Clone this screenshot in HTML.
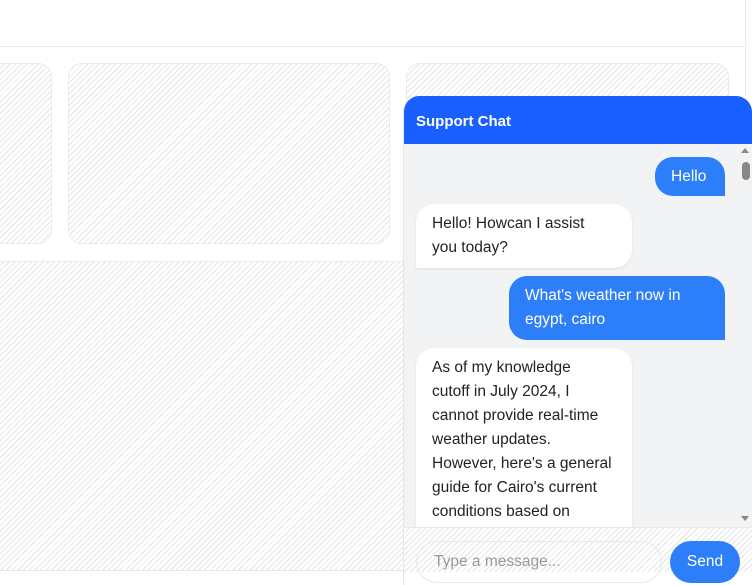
<!DOCTYPE html>
<html><head><style>
*{box-sizing:border-box;margin:0;padding:0}
body{width:752px;height:585px;overflow:hidden;background:#fff;font-family:"Liberation Sans",sans-serif;position:relative}
.hatch{background:repeating-linear-gradient(-45deg,#fff 0px,#fff 3px,#e4e4e4 3px,#e4e4e4 4px)}
.line{position:absolute;background:#ececec}
.card{position:absolute;border:1px solid #ebebeb;border-radius:14px}
#chat{position:absolute;left:403px;top:96px;width:349px;height:489px;border-radius:16px 16px 0 0;overflow:hidden;border-left:1px solid #e5e5e5}
#hd{height:48px;background:#1a5fff;color:#fff;font-weight:bold;font-size:15px;padding:17px 0 0 12px}
#bd{position:absolute;top:48px;left:0;width:349px;height:383px;background:#f2f3f5;overflow:hidden}
.b{position:absolute;font-size:15.5px;line-height:24px;padding:8px 16px;border-radius:18px;white-space:nowrap}
.u{background:#2d7ff9;color:#fff;border-bottom-right-radius:0}
.a{background:#fff;color:#222;border-bottom-left-radius:0;box-shadow:0 1px 2px rgba(0,0,0,.08)}
#sb{position:absolute;right:0;top:0;width:15px;height:383px;background:#f2f3f5}
#ft{position:absolute;top:431px;left:0;width:349px;height:58px;border-top:1px solid #e8e8e8}
</style></head><body>
<div class="line" style="left:0;top:46px;width:745px;height:1px"></div>
<div class="line" style="left:745px;top:0;width:1px;height:96px"></div>
<div class="card hatch" style="left:-20px;top:63px;width:72px;height:181px"></div>
<div class="card hatch" style="left:68px;top:63px;width:322px;height:181px"></div>
<div class="card hatch" style="left:406px;top:63px;width:323px;height:60px"></div>
<div class="hatch" style="position:absolute;left:0;top:261px;width:730px;height:310px;border-top:1px solid #ececec;border-bottom:1px solid #e6e6e6"></div>
<div id="chat">
<div id="hd">Support Chat</div>
<div id="bd">
<div class="b u" style="left:251px;top:13px;width:70px;height:39px;padding-left:16px">Hello</div>
<div class="b a" style="left:12px;top:60px;width:216px;height:64px">Hello! Howcan I assist<br>you today?</div>
<div class="b u" style="left:105px;top:132px;width:216px;height:64px">What's weather now in<br>egypt, cairo</div>
<div class="b a" style="left:12px;top:204px;width:216px;height:240px">As of my knowledge<br>cutoff in July 2024, I<br>cannot provide real-time<br>weather updates.<br>However, here's a general<br>guide for Cairo's current<br>conditions based on</div>
<div id="sb"><div style="position:absolute;left:3px;top:4px;border:4px solid transparent;border-bottom:5px solid #888;border-top:0"></div><div style="position:absolute;left:4px;top:18px;width:8px;height:18px;border-radius:4px;background:#888"></div><div style="position:absolute;left:3px;bottom:6px;border:4px solid transparent;border-top:5px solid #888;border-bottom:0"></div></div>
</div>
<div id="ft" class="hatch">
<div style="position:absolute;left:0;top:44px;width:349px;height:14px;background:#fff"></div>
<div style="position:absolute;left:12px;top:13px;width:246px;height:42px;border:1px solid #e8e8e8;border-radius:21px;color:#9a9a9a;font-size:15.5px;padding:11px 0 0 17px">Type a message...</div>
<div style="position:absolute;left:266px;top:13px;width:70px;height:42px;border-radius:21px;background:#2d7ff9;color:#fff;font-size:15.5px;text-align:center;padding-top:12px">Send</div>
</div>
</div>
</body></html>
